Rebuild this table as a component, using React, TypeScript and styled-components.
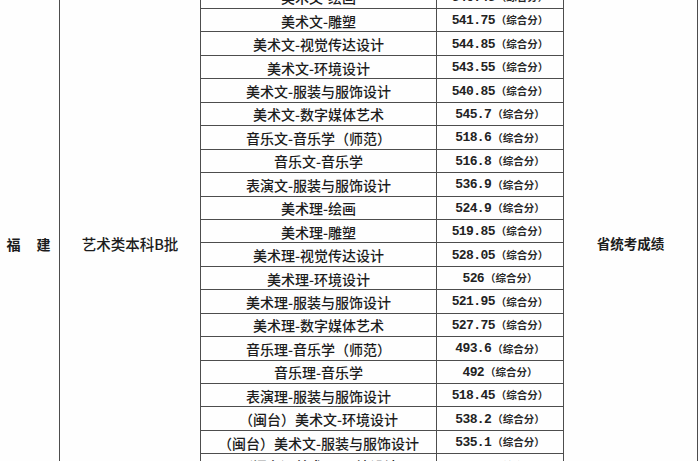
import styled, { createGlobalStyle } from 'styled-components'

const GlobalStyle = createGlobalStyle`
  html, body {
    margin: 0;
    padding: 0;
    height: 461px;
    overflow: hidden;
    background: #fcfcfd;
  }
`

const Page = styled.div`
  width: 700px;
  height: 461px;
  overflow: hidden;
  background: #fcfcfd;
`

// the table is scrolled: its top rows and left border are outside the picture
const Sheet = styled.div`
  display: grid;
  grid-template-columns: 61px 140px 235px 126px 133px;
  grid-template-rows: repeat(22, 22.45px);
  gap: 1px;
  padding: 1px;
  width: max-content;
  margin: -15.45px 0 0 -3px;
  background: #4d4d4d;
  color: #1c1c1c;
  font-family: "Noto Sans CJK SC", "Noto Sans", sans-serif;
`

const Cell = styled.div`
  display: flex;
  align-items: center;
  justify-content: center;
  background: #fefefe;
  white-space: nowrap;
  font-size: 14px;
  font-weight: 500;
  line-height: 1;
`

const SpanCell = styled(Cell)<{ $col: number }>`
  grid-column: ${p => p.$col};
  grid-row: 1 / -1;
  padding-top: 2px;
`

const Province = styled(SpanCell)`
  gap: 16px;
  font-weight: 600;
`

const Batch = styled(SpanCell)`
  font-size: 14.5px;
`

const Basis = styled(SpanCell)`
  font-size: 13.5px;
  font-weight: 600;
`

const Major = styled(Cell)`
  grid-column: 3;
  padding-top: 1px;
`

const Score = styled(Cell)`
  grid-column: 4;
  padding-top: 1px;
  gap: 1px;
`

const Num = styled.span`
  font-family: "Liberation Mono", monospace;
  font-weight: 700;
  font-size: 13px;
  letter-spacing: -0.6px;
  color: #222;
`

const Note = styled.span`
  font-size: 10.5px;
  font-weight: 700;
  color: #2a2a2a;
`

const rows: [string, string][] = [
  ['美术文-绘画', '546.45'],
  ['美术文-雕塑', '541.75'],
  ['美术文-视觉传达设计', '544.85'],
  ['美术文-环境设计', '543.55'],
  ['美术文-服装与服饰设计', '540.85'],
  ['美术文-数字媒体艺术', '545.7'],
  ['音乐文-音乐学（师范）', '518.6'],
  ['音乐文-音乐学', '516.8'],
  ['表演文-服装与服饰设计', '536.9'],
  ['美术理-绘画', '524.9'],
  ['美术理-雕塑', '519.85'],
  ['美术理-视觉传达设计', '528.05'],
  ['美术理-环境设计', '526'],
  ['美术理-服装与服饰设计', '521.95'],
  ['美术理-数字媒体艺术', '527.75'],
  ['音乐理-音乐学（师范）', '493.6'],
  ['音乐理-音乐学', '492'],
  ['表演理-服装与服饰设计', '518.45'],
  ['（闽台）美术文-环境设计', '538.2'],
  ['（闽台）美术文-服装与服饰设计', '535.1'],
  ['（闽台）美术理-环境设计', '520.3'],
  ['（闽台）美术理-服装与服饰设计', '517.4'],
]

export default function App() {
  return (
    <Page>
      <GlobalStyle />
      <Sheet>
        <Province $col={1}>
          <span>福</span>
          <span>建</span>
        </Province>
        <Batch $col={2}>艺术类本科B批</Batch>
        {rows.map(([major, score]) => [
          <Major key={major}>{major}</Major>,
          <Score key={major + '-s'}>
            <Num>{score}</Num>
            <Note>（综合分）</Note>
          </Score>,
        ])}
        <Basis $col={5}>省统考成绩</Basis>
      </Sheet>
    </Page>
  )
}
